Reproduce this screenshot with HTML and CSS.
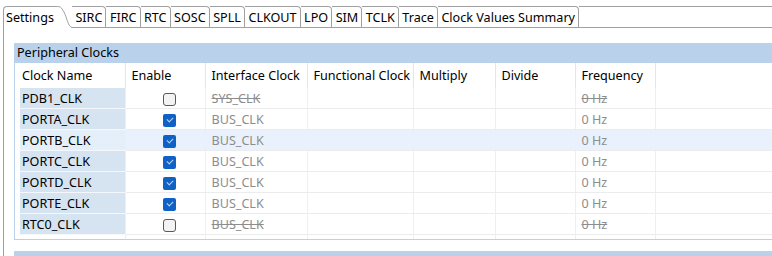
FILE: index.html
```html
<!DOCTYPE html>
<html lang="en">
<head>
    <meta charset="UTF-8">
    <meta name="viewport" content="width=device-width, initial-scale=1.0">
    <title>Clock Settings</title>
    <link rel="stylesheet" href="styles.css">
</head>
<body>
    <!-- Tab strip -->
    <div class="tabs">
        <div class="tab active">Settings</div>
        <svg class="tab-slant" width="16" height="22" viewBox="0 0 16 22">
            <path d="M0 0.5 C5 0.5 5 1 8 6 C11 12 12 20.5 16 21.5" fill="none" stroke="#a0a0a0" stroke-width="1"/>
        </svg>
        <div class="tab">SIRC</div>
        <div class="tab">FIRC</div>
        <div class="tab">RTC</div>
        <div class="tab">SOSC</div>
        <div class="tab">SPLL</div>
        <div class="tab">CLKOUT</div>
        <div class="tab">LPO</div>
        <div class="tab">SIM</div>
        <div class="tab">TCLK</div>
        <div class="tab">Trace</div>
        <div class="tab">Clock Values Summary</div>
        <div class="tab-fill"></div>
    </div>

    <div class="content">
        <!-- Peripheral Clocks -->
        <div class="group">
            <div class="group-title">Peripheral Clocks</div>
            <table class="clocks">
                <colgroup>
                    <col style="width: 105px">
                    <col style="width: 80px">
                    <col style="width: 102px">
                    <col style="width: 106px">
                    <col style="width: 82px">
                    <col style="width: 80px">
                    <col style="width: 80px">
                    <col>
                </colgroup>
                <thead>
                    <tr>
                        <th class="c-name">Clock Name</th>
                        <th>Enable</th>
                        <th>Interface Clock</th>
                        <th>Functional Clock</th>
                        <th>Multiply</th>
                        <th>Divide</th>
                        <th>Frequency</th>
                        <th class="c-fill"></th>
                    </tr>
                </thead>
                <tbody>
                    <tr class="off">
                        <td class="name">PDB1_CLK</td>
                        <td class="enable"><span class="check"></span></td>
                        <td class="dim">SYS_CLK</td>
                        <td></td><td></td><td></td>
                        <td class="dim">0 Hz</td>
                        <td></td>
                    </tr>
                    <tr>
                        <td class="name">PORTA_CLK</td>
                        <td class="enable"><span class="check on"></span></td>
                        <td class="dim">BUS_CLK</td>
                        <td></td><td></td><td></td>
                        <td class="dim">0 Hz</td>
                        <td></td>
                    </tr>
                    <tr class="hover">
                        <td class="name">PORTB_CLK</td>
                        <td class="enable"><span class="check on"></span></td>
                        <td class="dim">BUS_CLK</td>
                        <td></td><td></td><td></td>
                        <td class="dim">0 Hz</td>
                        <td></td>
                    </tr>
                    <tr>
                        <td class="name">PORTC_CLK</td>
                        <td class="enable"><span class="check on"></span></td>
                        <td class="dim">BUS_CLK</td>
                        <td></td><td></td><td></td>
                        <td class="dim">0 Hz</td>
                        <td></td>
                    </tr>
                    <tr>
                        <td class="name">PORTD_CLK</td>
                        <td class="enable"><span class="check on"></span></td>
                        <td class="dim">BUS_CLK</td>
                        <td></td><td></td><td></td>
                        <td class="dim">0 Hz</td>
                        <td></td>
                    </tr>
                    <tr>
                        <td class="name">PORTE_CLK</td>
                        <td class="enable"><span class="check on"></span></td>
                        <td class="dim">BUS_CLK</td>
                        <td></td><td></td><td></td>
                        <td class="dim">0 Hz</td>
                        <td></td>
                    </tr>
                    <tr class="off">
                        <td class="name">RTC0_CLK</td>
                        <td class="enable"><span class="check"></span></td>
                        <td class="dim">BUS_CLK</td>
                        <td></td><td></td><td></td>
                        <td class="dim">0 Hz</td>
                        <td></td>
                    </tr>
                    <tr class="filler">
                        <td></td><td></td><td></td><td></td><td></td><td></td><td></td><td></td>
                    </tr>
                </tbody>
            </table>
        </div>

        <!-- next group, cut off by the window -->
        <div class="group next">
            <div class="group-title">&nbsp;</div>
        </div>
    </div>
</body>
</html>
```

FILE: styles.css
```css
body {
    font-family: "Noto Sans", "Open Sans", sans-serif;
    font-size: 12.6px;
    margin: 0;
    padding: 0;
    background-color: white;
    color: #000;
    overflow: hidden;
}
.tabs {
    display: flex;
    margin: 6px 0 0 3px;
    height: 22px;
}
.tab {
    box-sizing: border-box;
    height: 22px;
    line-height: 21px;
    padding: 0 3px 0 3.5px;
    border-top: 1px solid #a0a0a0;
    border-bottom: 1px solid #a0a0a0;
    border-right: 1px solid #a0a0a0;
    border-top-right-radius: 4px;
    white-space: nowrap;
}
.tab.active {
    border: 1px solid #a0a0a0;
    border-right: none;
    border-bottom: none;
    border-top-left-radius: 4px;
    border-top-right-radius: 0;
    padding: 0 2px 0 2px;
}
.tab-slant {
    display: block;
    flex: none;
}
.tab-fill {
    flex: 1;
    border-top: 1px solid #a0a0a0;
    border-bottom: 1px solid #a0a0a0;
}
.content {
    margin-left: 3px;
    border-left: 1px solid #a0a0a0;
    padding: 15px 0 0 10px;
    height: 213px;
    overflow: hidden;
}
.group {
    border-left: 1px solid #b9d1ea;
    border-bottom: 1px solid #b9d1ea;
}
.group.next {
    margin-top: 11px;
}
.group-title {
    background-color: #b9d1ea;
    height: 20px;
    line-height: 20px;
    padding-left: 3px;
    margin-left: -1px;
}
.clocks {
    border-collapse: collapse;
    table-layout: fixed;
    margin-left: 5px;
    width: calc(100% - 5px);
}
.clocks th {
    font-weight: normal;
    text-align: left;
    height: 25px;
    padding: 0 0 0 6px;
    border-right: 1px solid #e6e6e6;
    vertical-align: middle;
    white-space: nowrap;
}
.clocks th.c-name {
    padding-left: 2px;
}
.clocks th.c-fill {
    border-right: none;
}
.clocks td {
    height: 20px;
    padding: 0 0 0 6px;
    border-right: 1px solid #efefef;
    border-bottom: 1px solid #ececec;
    white-space: nowrap;
}
.clocks td:last-child {
    border-right: none;
}
.clocks td.name {
    background-color: #d6e3f1;
    padding-left: 2px;
    border-bottom-color: #f4f7fb;
}
.clocks tr.hover td {
    background-color: #e9f2fc;
}
.clocks tr.hover td.name {
    background-color: #e5effa;
}
.clocks td.enable {
    padding: 0;
    text-align: center;
}
.clocks td.dim {
    color: #8d8d8d;
}
.clocks tr.off td.dim {
    text-decoration: line-through;
}
.clocks tr.filler td {
    height: 4px;
    border-bottom: none;
}
.check {
    display: inline-block;
    box-sizing: border-box;
    width: 13px;
    height: 13px;
    vertical-align: middle;
    margin-left: 9px;
    border: 1px solid #5a5a5a;
    border-radius: 3px;
    background-color: #f3f3f3;
}
.check.on {
    border: none;
    border-radius: 2px;
    background-color: #1061c6;
    position: relative;
}
.check.on::after {
    content: "";
    position: absolute;
    left: 4px;
    top: 3px;
    width: 5px;
    height: 3px;
    border-left: 1px solid #b9d3f3;
    border-bottom: 1px solid #b9d3f3;
    transform: rotate(-45deg);
}
```
